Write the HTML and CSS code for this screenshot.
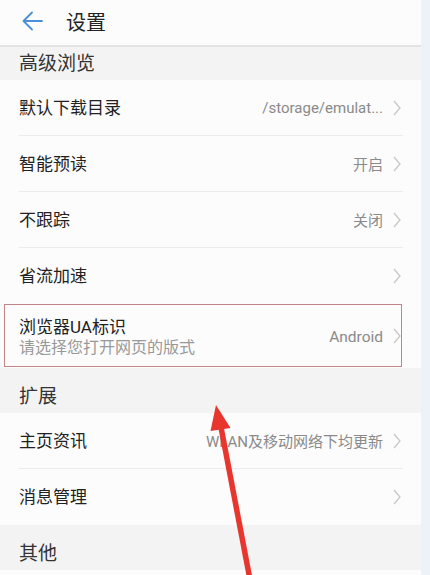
FILE: index.html
```html
<!DOCTYPE html>
<html lang="zh-CN">
<head>
<meta charset="utf-8">
<link rel="stylesheet" href="styles.css">
</head>
<body>
<div class="screen">
  <div class="main">
    <header class="topbar">
      <svg class="back" width="24" height="24" viewBox="0 0 24 24"><path d="M21 12H3M11 3.5L2.5 12 11 20.5" fill="none" stroke="#4a8ed8" stroke-width="1.8" stroke-linecap="round" stroke-linejoin="round"/></svg>
      <span class="title">设置</span>
    </header>
    <div class="section first"><span>高级浏览</span></div>
    <div class="row"><div class="inner"><span class="label">默认下载目录</span><span class="value">/storage/emulat...</span><svg class="chev" width="8" height="16" viewBox="0 0 8 16"><path d="M1 1L7 8 1 15" fill="none" stroke="#c8c8c8" stroke-width="1.3"/></svg></div></div>
    <div class="row"><div class="inner"><span class="label">智能预读</span><span class="value">开启</span><svg class="chev" width="8" height="16" viewBox="0 0 8 16"><path d="M1 1L7 8 1 15" fill="none" stroke="#c8c8c8" stroke-width="1.3"/></svg></div></div>
    <div class="row"><div class="inner"><span class="label">不跟踪</span><span class="value">关闭</span><svg class="chev" width="8" height="16" viewBox="0 0 8 16"><path d="M1 1L7 8 1 15" fill="none" stroke="#c8c8c8" stroke-width="1.3"/></svg></div></div>
    <div class="row"><div class="inner noline"><span class="label">省流加速</span><span class="value"></span><svg class="chev" width="8" height="16" viewBox="0 0 8 16"><path d="M1 1L7 8 1 15" fill="none" stroke="#c8c8c8" stroke-width="1.3"/></svg></div></div>
    <div class="ua-row">
      <div class="highlight">
        <div class="texts"><span class="label">浏览器UA标识</span><span class="sub">请选择您打开网页的版式</span></div>
        <span class="value">Android</span><svg class="chev" width="8" height="16" viewBox="0 0 8 16"><path d="M1 1L7 8 1 15" fill="none" stroke="#c8c8c8" stroke-width="1.3"/></svg>
      </div>
    </div>
    <div class="section"><span>扩展</span></div>
    <div class="row"><div class="inner"><span class="label">主页资讯</span><span class="value">WLAN及移动网络下均更新</span><svg class="chev" width="8" height="16" viewBox="0 0 8 16"><path d="M1 1L7 8 1 15" fill="none" stroke="#c8c8c8" stroke-width="1.3"/></svg></div></div>
    <div class="row"><div class="inner noline"><span class="label">消息管理</span><span class="value"></span><svg class="chev" width="8" height="16" viewBox="0 0 8 16"><path d="M1 1L7 8 1 15" fill="none" stroke="#c8c8c8" stroke-width="1.3"/></svg></div></div>
    <div class="section"><span>其他</span></div>
  </div>
  <div class="strip"></div>
  <svg class="annot" width="430" height="575" viewBox="0 0 430 575">
    <line x1="220" y1="422" x2="252" y2="590" stroke="#e8362f" stroke-width="5.5"/>
    <polygon points="216,405 230.5,428 210.5,431" fill="#e8362f"/>
  </svg>
</div>
</body>
</html>
```
FILE: styles.css
```css
html, body {
  margin: 0;
  padding: 0;
  background: #fcfcfc;
}
body {
  font-family: Roboto, "Noto Sans CJK SC", sans-serif;
  color: #222;
}
.screen {
  position: relative;
  width: 430px;
  height: 575px;
  overflow: hidden;
  display: flex;
}
.main {
  width: 421px;
  background: #fcfcfc;
  display: flex;
  flex-direction: column;
}
.strip {
  flex: 1;
  background: #edf2f9;
}
.topbar {
  height: 45px;
  border-bottom: 2px solid #e3e3e3;
  display: flex;
  align-items: center;
  padding-left: 21px;
  background: #fcfcfc;
}
.back {
  margin-top: -4px;
}
.title {
  font-size: 20px;
  margin-left: 21px;
  margin-top: -3px;
  color: #222;
}
.section {
  height: 45px;
  box-sizing: border-box;
  padding: 16px 0 0 19px;
  background: #f3f3f3;
  font-size: 19px;
  line-height: 26px;
  color: #333;
}
.section.first {
  height: 33px;
  padding-top: 4px;
}
.row {
  padding: 0 18px 0 19px;
}
.inner {
  height: 56px;
  box-sizing: border-box;
  border-bottom: 1px solid #ececec;
  display: flex;
  align-items: center;
  padding-right: 2px;
}
.inner.noline {
  border-bottom-color: transparent;
}
.label {
  font-size: 17px;
  color: #222;
  line-height: 22px;
  flex: 1;
}
.value {
  font-size: 15px;
  color: #8a8a8a;
  margin-right: 10px;
}
.chev {
  display: block;
  flex: none;
}
.ua-row {
  height: 64px;
  padding: 0 19px 0 4px;
}
.highlight {
  height: 63px;
  box-sizing: border-box;
  border: 1.5px solid #c48589;
  display: flex;
  align-items: center;
  padding: 0 0 0 14px;
}
.texts {
  flex: 1;
  display: flex;
  flex-direction: column;
  padding-top: 2px;
}
.sub {
  font-size: 16px;
  color: #999;
  line-height: 20px;
}
.highlight .value {
  font-size: 15.5px;
  margin-top: 2px;
}
.annot {
  position: absolute;
  top: 0;
  left: 0;
  pointer-events: none;
}
```
